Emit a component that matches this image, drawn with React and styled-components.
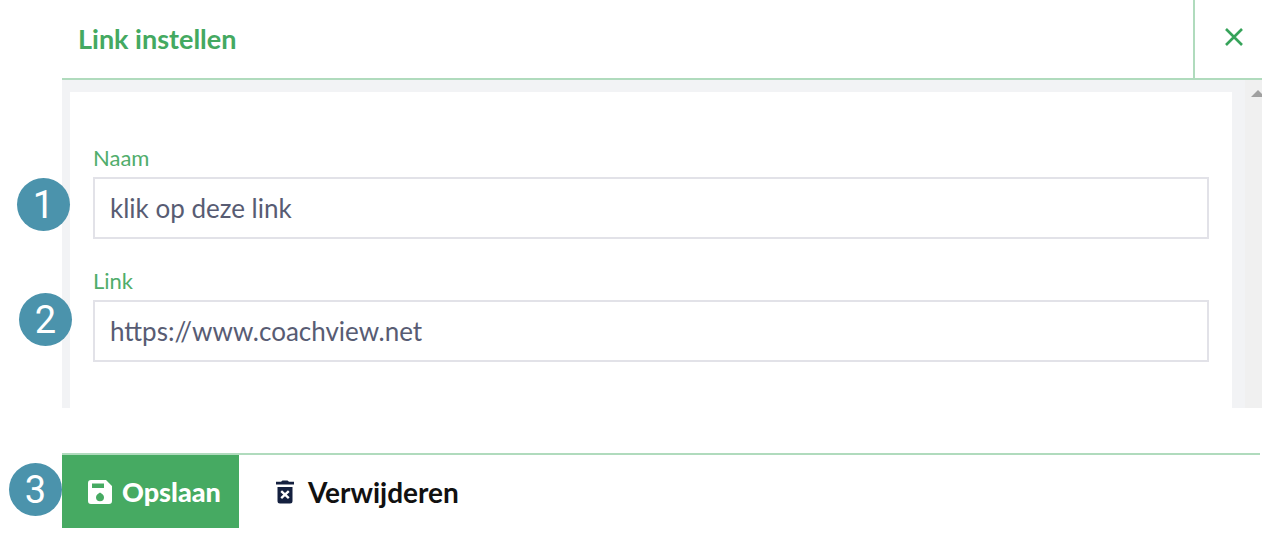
import React from 'react';
import styled, { createGlobalStyle } from 'styled-components';

const GlobalStyle = createGlobalStyle`
  *, *::before, *::after { box-sizing: border-box; }
  body {
    margin: 0;
    background: #fff;
    font-family: Lato, "Liberation Sans", sans-serif;
    overflow-x: hidden;
  }
`;

const Dialog = styled.form`
  margin-left: 62px;
`;

const Header = styled.header`
  display: flex;
  height: 80px;
  border-bottom: 2px solid #b0dbbd;
`;

const Title = styled.h1`
  flex: 1;
  margin: 0;
  padding: 23px 16px 0;
  font-size: 27px;
  line-height: 32px;
  font-weight: 700;
  color: #44a961;
`;

const CloseButton = styled.button`
  width: 69px;
  padding: 0 0 4px 10px;
  border: 0;
  border-left: 2px solid #b0dbbd;
  background: none;
  color: #36a35a;
  cursor: pointer;

  svg { display: block; margin: 0 auto; }
`;

const Body = styled.div`
  display: flex;
  background: #f2f3f5;
`;

const Panel = styled.main`
  flex: 1;
  display: grid;
  gap: 28px;
  margin: 12px 13px 0 8px;
  padding: 52px 23px 46px;
  background: #fff;
`;

const ScrollTrack = styled.div`
  width: 17px;
  padding: 10px 0 0 6px;
  overflow: hidden;
  background: #f0f0f0;

  svg { display: block; }
`;

const Field = styled.div`
  position: relative;
`;

const Label = styled.label`
  display: block;
  padding-bottom: 5px;
  font-size: 22px;
  line-height: 28px;
  color: #50ad6b;
`;

const TextInput = styled.input`
  display: block;
  width: 100%;
  height: 62px;
  padding: 0 15px;
  border: 2px solid #e2e2e8;
  border-radius: 0;
  background: #fff;
  color: #585c73;
  font-family: inherit;
  font-size: 26px;
  outline: none;
`;

const Badge = styled.span`
  position: absolute;
  left: ${(p) => p.$left}px;
  top: ${(p) => p.$top}px;
  width: 53px;
  height: 53px;
  border-radius: 50%;
  background: #4b93ac;
  color: #fff;
  font-family: Roboto, "Liberation Sans", sans-serif;
  font-size: 38px;
  line-height: 55px;
  text-align: center;
`;

const Footer = styled.footer`
  position: relative;
  display: flex;
  margin: 45px 2px 0 0;
  border-top: 2px solid #b0dbbd;
`;

const Action = styled.button`
  display: flex;
  align-items: center;
  gap: ${(p) => (p.$primary ? 10 : 14)}px;
  height: 73px;
  padding: ${(p) => (p.$primary ? '0 18px 0 26px' : '0 37px')};
  border: 0;
  background: ${(p) => (p.$primary ? '#46aa62' : 'transparent')};
  color: ${(p) => (p.$primary ? '#fff' : '#111')};
  font-family: inherit;
  font-size: ${(p) => (p.$primary ? 27 : 28)}px;
  font-weight: ${(p) => (p.$primary ? 900 : 700)};
  cursor: pointer;
`;

const CloseIcon = () => (
  <svg width="20" height="20" viewBox="0 0 20 20" aria-hidden="true">
    <path d="M2 2 18 18M18 2 2 18" fill="none" stroke="currentColor" strokeWidth="2.6" />
  </svg>
);

const SaveIcon = () => (
  <svg width="24" height="24" viewBox="0 0 24 24" aria-hidden="true">
    <path
      fill="currentColor"
      fillRule="evenodd"
      d="M3 0H18L24 6V21Q24 24 21 24H3Q0 24 0 21V3Q0 0 3 0ZM4 3.5V8H16V3.5ZM12 12.5C10 13.6 8 15 8 17.2A4 4 0 0 0 16 17.2C16 15 14 13.6 12 12.5Z"
    />
  </svg>
);

const TrashIcon = () => (
  <svg width="18" height="24" viewBox="0 0 18 24" aria-hidden="true">
    <path fill="#14203f" d="M0 1.8H5L6.5 0.5H11.5L13 1.8H18V4.5H0ZM1.5 7H16.5V21Q16.5 23.5 14 23.5H4Q1.5 23.5 1.5 21Z" />
    <path d="M5.2 11.2 12.8 18.2M12.8 11.2 5.2 18.2" stroke="#fff" strokeWidth="2.4" />
  </svg>
);

export default function App() {
  return (
    <>
      <GlobalStyle />
      <Dialog onSubmit={(e) => e.preventDefault()}>
        <Header>
          <Title>Link instellen</Title>
          <CloseButton type="button" aria-label="Sluiten">
            <CloseIcon />
          </CloseButton>
        </Header>
        <Body>
          <Panel>
            <Field>
              <Label htmlFor="naam">Naam</Label>
              <TextInput id="naam" type="text" defaultValue="klik op deze link" />
              <Badge $left={-76} $top={34}>1</Badge>
            </Field>
            <Field>
              <Label htmlFor="link">Link</Label>
              <TextInput id="link" type="text" defaultValue="https://www.coachview.net" />
              <Badge $left={-74} $top={26}>2</Badge>
            </Field>
          </Panel>
          <ScrollTrack aria-hidden="true">
            <svg width="14" height="7" viewBox="0 0 14 7">
              <path d="M0 7 7 0 14 7Z" fill="#a0a0a0" />
            </svg>
          </ScrollTrack>
        </Body>
        <Footer>
          <Badge $left={-53} $top={8}>3</Badge>
          <Action type="submit" $primary>
            <SaveIcon />
            Opslaan
          </Action>
          <Action type="button">
            <TrashIcon />
            Verwijderen
          </Action>
        </Footer>
      </Dialog>
    </>
  );
}
